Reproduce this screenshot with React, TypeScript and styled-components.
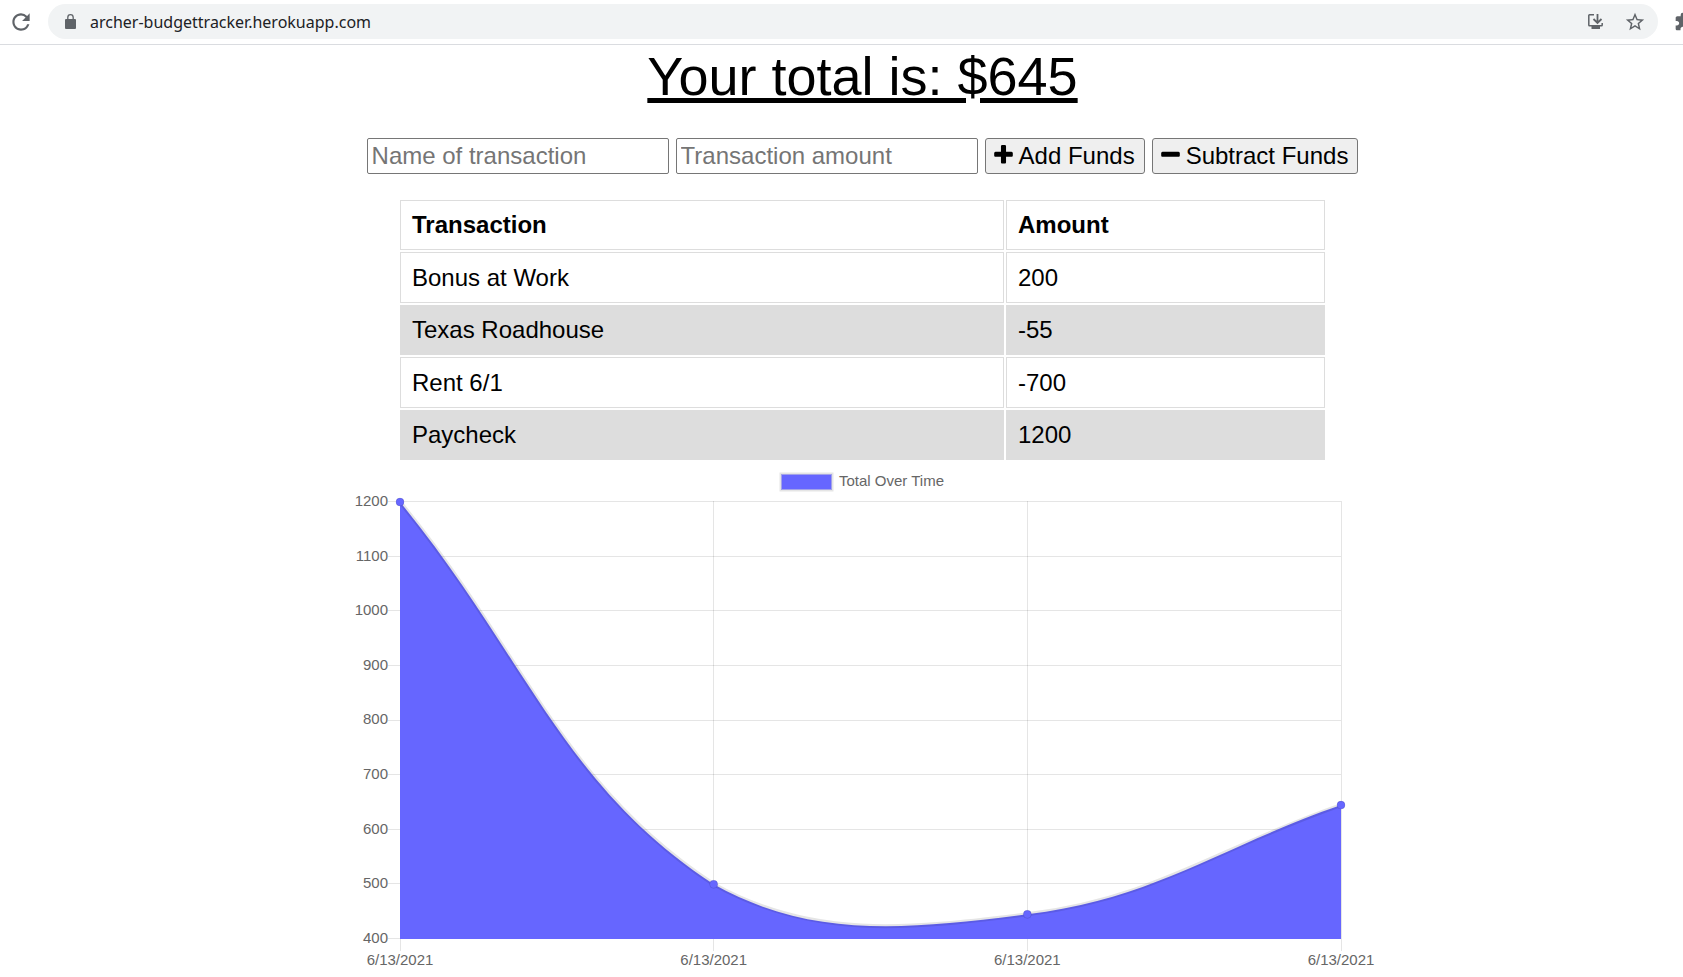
import React from "react";
import styled, { createGlobalStyle } from "styled-components";
import { MdStarBorder, MdExtension, MdRefresh } from "react-icons/md";

const GlobalStyle = createGlobalStyle`
  * { box-sizing: border-box; }
  body {
    margin: 0;
    background: #fff;
    color: #000;
    font: 24px/28px "Liberation Sans", Arial, sans-serif;
    overflow-x: hidden;
  }
`;

const BrowserBar = styled.header`
  display: flex;
  align-items: center;
  height: 45px;
  padding: 0 0 1px 8px;
  border-bottom: 1px solid #dadce0;
  overflow: hidden;
`;

const IconButton = styled.button`
  display: flex;
  flex: none;
  padding: 0;
  border: 0;
  background: none;
  color: #5f6368;
`;

/* The toolbar runs on past the window's right edge. */
const ToolbarOverflow = styled.div`
  display: flex;
  flex: none;
  width: 9px;
`;

const AddressBar = styled.div`
  display: flex;
  flex: 1;
  align-items: center;
  gap: 14px;
  height: 35px;
  margin: 0 16px 0 14px;
  padding: 0 12px 0 17px;
  border-radius: 18px;
  background: #f1f3f4;
  color: #5f6368;
`;

const AddressActions = styled.div`
  display: flex;
  align-items: center;
  gap: 20px;
`;

const Address = styled.input`
  flex: 1;
  min-width: 0;
  padding: 0;
  border: 0;
  background: none;
  color: #202124;
  font: 16px/24px "Noto Sans", "Open Sans", sans-serif;
`;

const Main = styled.main`
  display: flex;
  flex-direction: column;
  align-items: center;
  padding-left: 42px;
`;

const Total = styled.h1`
  margin: 0;
  font-size: 54px;
  line-height: 62px;
  font-weight: 400;
  text-decoration: underline;
`;

const Form = styled.form`
  display: flex;
  gap: 7px;
  margin: 31px 0 24px;
`;

const Field = styled.input`
  width: 302px;
  height: 36px;
  padding: 1px 4px;
  border: 1px solid #767676;
  border-radius: 2px;
  font: inherit;
  &::placeholder { color: #757575; }
`;

const FundsButton = styled.button`
  display: flex;
  align-items: center;
  gap: 6px;
  height: 36px;
  padding: 0 9px 0 8px;
  border: 1px solid #767676;
  border-radius: 3px;
  background: #efefef;
  color: #000;
  font: inherit;
  white-space: nowrap;
`;

const Table = styled.table`
  width: 929px;
  max-width: 100%;
  table-layout: fixed;
  border-spacing: 2px;
  text-align: left;
`;

const Cell = styled.td`
  height: 51px;
  padding: 0 11px;
  border: 1px solid #ddd;
  tr:nth-child(even) > & {
    height: 50px;
    background: #ddd;
  }
`;

const HeadCell = styled.th<{ $width?: string }>`
  width: ${(p) => p.$width ?? "auto"};
  height: 50px;
  padding: 0 11px;
  border: 1px solid #ddd;
`;

const Chart = styled.svg`
  display: block;
  width: 1025px;
  max-width: 100%;
  margin-top: 8px;
  font: 15px "Liberation Sans", Arial, sans-serif;
  fill: #666;
`;

const transactions = [
  { name: "Bonus at Work", value: 200 },
  { name: "Texas Roadhouse", value: -55 },
  { name: "Rent 6/1", value: -700 },
  { name: "Paycheck", value: 1200 },
];

const totals = [1200, 500, 445, 645];
const ticks = [1200, 1100, 1000, 900, 800, 700, 600, 500, 400];
const LEFT = 50;
const RIGHT = 991;
const TOP = 32;
const BOTTOM = 468.9;
const TENSION = 0.4;

type Point = { x: number; y: number };

const scaleX = (i: number) => LEFT + (i * (RIGHT - LEFT)) / (totals.length - 1);
const scaleY = (v: number) => TOP + ((1200 - v) / 800) * (BOTTOM - TOP);
const clampY = (y: number) => Math.min(BOTTOM, Math.max(TOP, y));
const snap = (n: number) => Math.floor(n) + 0.5;

const points: Point[] = totals.map((v, i) => ({ x: scaleX(i), y: scaleY(v) }));

function controls(i: number) {
  const cur = points[i];
  const prev = points[i - 1] ?? cur;
  const next = points[i + 1] ?? cur;
  const before = Math.hypot(cur.x - prev.x, cur.y - prev.y);
  const after = Math.hypot(next.x - cur.x, next.y - cur.y);
  const a = (TENSION * before) / (before + after);
  const b = (TENSION * after) / (before + after);
  const dx = next.x - prev.x;
  const dy = next.y - prev.y;
  return {
    into: { x: cur.x - a * dx, y: clampY(cur.y - a * dy) },
    out: { x: cur.x + b * dx, y: clampY(cur.y + b * dy) },
  };
}

const curve = points
  .map((p, i) => {
    if (i === 0) return `M${p.x} ${p.y}`;
    const { out } = controls(i - 1);
    const { into } = controls(i);
    return `C${out.x} ${out.y} ${into.x} ${into.y} ${p.x} ${p.y}`;
  })
  .join("");

function TotalChart() {
  return (
    <Chart viewBox="0 0 1025 505" role="img" aria-label="Total Over Time">
      <rect x="431" y="4" width="51" height="16" fill="#66f" />
      <rect x="430.5" y="3.5" width="52" height="17" fill="none" stroke="#e5e5e5" strokeWidth="2" />
      <rect x="431.5" y="4.5" width="50" height="15" fill="none" stroke="#a3a3e8" />
      <text x="489" y="16">Total Over Time</text>
      <g stroke="rgba(0,0,0,.1)">
        {ticks.map((t) => (
          <path key={t} d={`M38 ${snap(scaleY(t) - 0.3)}H991`} />
        ))}
        {points.map((p) => (
          <path key={p.x} d={`M${snap(p.x)} 31V481`} />
        ))}
      </g>
      <path d={`${curve}V${BOTTOM}H${LEFT}Z`} fill="#66f" />
      <path d={curve} fill="none" stroke="rgba(0,0,0,.1)" strokeWidth="4" />
      {points.map((p) => (
        <circle key={p.x} cx={p.x} cy={p.y} r="4" fill="#66f" stroke="rgba(0,0,0,.1)" />
      ))}
      {ticks.map((t) => (
        <text key={t} x="38" y={Math.round(scaleY(t)) + 4} textAnchor="end">{t}</text>
      ))}
      {points.map((p) => (
        <text key={p.x} x={p.x} y="495" textAnchor="middle">6/13/2021</text>
      ))}
    </Chart>
  );
}

function LockIcon() {
  return (
    <svg width="11" height="15" viewBox="0 0 11 15" fill="currentColor">
      <rect y="5" width="11" height="10" rx="1" />
      <path d="M2.8 6V3.4a2.7 2.7 0 0 1 5.4 0V6" fill="none" stroke="currentColor" strokeWidth="1.3" />
    </svg>
  );
}

function InstallIcon() {
  return (
    <svg width="17" height="17" viewBox="0 0 17 17" fill="none" stroke="currentColor">
      <path d="M7 1.8H2.5Q1.8 1.8 1.8 2.5V12Q1.8 12.8 2.5 12.8H14.5Q15.2 12.8 15.2 12V10" strokeWidth="1.5" />
      <path d="M10.5 1V9.5M6.5 6L10.5 10L14.5 6" strokeWidth="1.8" />
      <path d="M4.5 14.5H13" strokeWidth="3" />
    </svg>
  );
}

function PlusIcon() {
  return (
    <svg width="19" height="22" viewBox="192 128 1408 1664" fill="currentColor">
      <path d="M1600 736v192q0 40-28 68t-68 28h-416v416q0 40-28 68t-68 28h-192q-40 0-68-28t-28-68v-416h-416q-40 0-68-28t-28-68v-192q0-40 28-68t68-28h416v-416q0-40 28-68t68-28h192q40 0 68 28t28 68v416h416q40 0 68 28t28 68z" />
    </svg>
  );
}

function MinusIcon() {
  return (
    <svg width="19" height="22" viewBox="192 128 1408 1664" fill="currentColor">
      <path d="M1600 736v192q0 40-28 68t-68 28h-1216q-40 0-68-28t-28-68v-192q0-40 28-68t68-28h1216q40 0 68 28t28 68z" />
    </svg>
  );
}

export default function App() {
  return (
    <>
      <GlobalStyle />
      <BrowserBar>
        <IconButton aria-label="Reload"><MdRefresh size={26} /></IconButton>
        <AddressBar>
          <LockIcon />
          <Address aria-label="Address" defaultValue="archer-budgettracker.herokuapp.com" />
          <AddressActions>
            <IconButton aria-label="Install"><InstallIcon /></IconButton>
            <IconButton aria-label="Bookmark"><MdStarBorder size={22} /></IconButton>
          </AddressActions>
        </AddressBar>
        <ToolbarOverflow>
          <IconButton aria-label="Extensions"><MdExtension size={20} /></IconButton>
        </ToolbarOverflow>
      </BrowserBar>
      <Main>
        <Total>Your total is: $645</Total>
        <Form onSubmit={(e) => e.preventDefault()}>
          <Field aria-label="Name of transaction" placeholder="Name of transaction" />
          <Field aria-label="Transaction amount" placeholder="Transaction amount" />
          <FundsButton type="button"><PlusIcon />Add Funds</FundsButton>
          <FundsButton type="button"><MinusIcon />Subtract Funds</FundsButton>
        </Form>
        <Table>
          <thead>
            <tr>
              <HeadCell $width="604px">Transaction</HeadCell>
              <HeadCell>Amount</HeadCell>
            </tr>
          </thead>
          <tbody>
            {transactions.map((t) => (
              <tr key={t.name}>
                <Cell>{t.name}</Cell>
                <Cell>{t.value}</Cell>
              </tr>
            ))}
          </tbody>
        </Table>
        <TotalChart />
      </Main>
    </>
  );
}
